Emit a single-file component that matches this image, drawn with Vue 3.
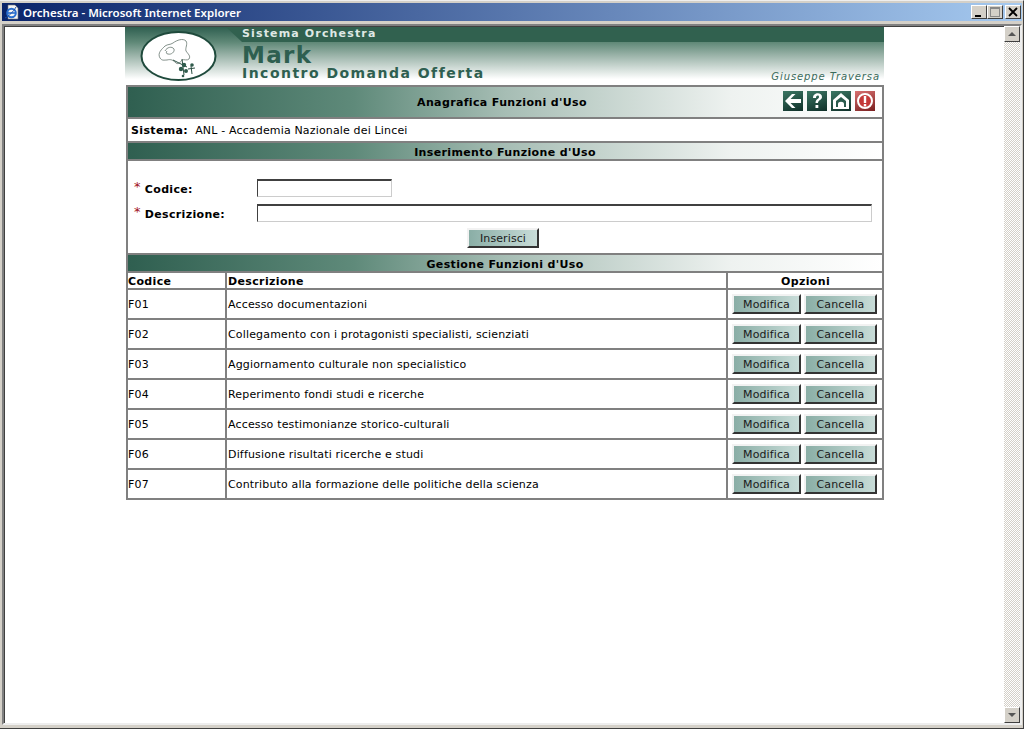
<script setup>
const rows = [
  ['F01', 'Accesso documentazioni'],
  ['F02', 'Collegamento con i protagonisti specialisti, scienziati'],
  ['F03', 'Aggiornamento culturale non specialistico'],
  ['F04', 'Reperimento fondi studi e ricerche'],
  ['F05', 'Accesso testimonianze storico-culturali'],
  ['F06', 'Diffusione risultati ricerche e studi'],
  ['F07', 'Contributo alla formazione delle politiche della scienza'],
]
</script>

<template>
  <div class="window">
    <div class="titlebar">
      <svg class="ie" width="16" height="16" viewBox="0 0 16 16">
        <path d="M4 1h7l3 3v11H4z" fill="#f4f4f4" stroke="#777" stroke-width=".6" />
        <circle cx="7.500" cy="9" r="4.300" fill="none" stroke="#2a6fd0" stroke-width="2" />
        <path d="M3.500 9h8" stroke="#2a6fd0" stroke-width="1.600" />
        <path d="M1 14c3-1 9-7 11-11" fill="none" stroke="#1b4fa8" stroke-width="1" />
      </svg>
      <span class="title-text">Orchestra - Microsoft Internet Explorer</span>
      <div class="win-btns">
        <button class="win-btn">
          <svg width="12" height="12" viewBox="0 0 12 12"><rect x="2" y="9" width="6" height="2" fill="#000" /></svg>
        </button>
        <button class="win-btn">
          <svg width="12" height="12" viewBox="0 0 12 12"><rect x="1.500" y="1.500" width="9" height="9" fill="none" stroke="#888" /><rect x="1" y="1" width="10" height="2" fill="#888" /></svg>
        </button>
        <button class="win-btn close">
          <svg width="12" height="12" viewBox="0 0 12 12"><path d="M2 2l8 8M10 2l-8 8" stroke="#000" stroke-width="1.800" /></svg>
        </button>
      </div>
    </div>

    <div class="client">
      <div class="viewport">
        <div class="page">
          <header class="banner">
            <div class="banner-logo">
              <svg width="78" height="54" viewBox="0 0 78 54">
                <ellipse cx="38.500" cy="27" rx="37" ry="24" fill="#fff" stroke="#1f4a3c" stroke-width="2" />
                <path d="M20 29c-3-5 2-9 5-12 3-2 5-1 8-3 4-3 10-5 13-2 2 3-1 7 0 10 2 3 5 5 3 8-2 2-5 0-7 1-2 2-3 5-6 3-3-3-5-4-9-3-3 0-5 1-7-2z" fill="none" stroke="#66766f" stroke-width=".8" />
                <path d="M25 22c2-4 7-5 9-2 1 3-3 6-6 5-2 0-2-2-1-3" fill="none" stroke="#66766f" stroke-width=".8" />
                <path d="M33 31l14 7M42 30l2 16M51 37l1 8M48 40l7-1" stroke="#2c4f43" stroke-width="1" fill="none" />
                <circle cx="44" cy="36" r="2.200" fill="#2f5b4c" />
                <circle cx="41" cy="40" r="2.200" fill="#2f5b4c" />
                <circle cx="46" cy="42" r="2" fill="#2f5b4c" />
                <circle cx="52" cy="36" r="1.800" fill="#2f5b4c" />
                <circle cx="43" cy="47" r="1.300" fill="#2f5b4c" />
              </svg>
            </div>
            <div class="banner-text">
              <div class="banner-band">Sistema Orchestra</div>
              <div class="banner-mark">Mark</div>
              <div class="banner-sub-row">
                <span class="banner-sub">Incontro Domanda Offerta</span>
                <span class="banner-author">Giuseppe Traversa</span>
              </div>
            </div>
          </header>

          <section class="box top-bar">
            <span class="top-title">Anagrafica Funzioni d'Uso</span>
            <div class="tools">
              <svg class="tool" viewBox="0 0 20 20">
                <path d="M2 10l7-7h3.500l-5 5H18v4H7.500l5 5H9z" fill="#fff" />
              </svg>
              <svg class="tool" viewBox="0 0 20 20">
                <path d="M6 7c0-6 9-6 9-1 0 3-4 3-4 6H8.500c0-4 3.500-4 3.500-6 0-2-3-2-3 1z" fill="#fff" />
                <rect x="8.500" y="14" width="2.800" height="3" fill="#fff" />
              </svg>
              <svg class="tool" viewBox="0 0 20 20">
                <path d="M10 2l8 7v9H2V9z" fill="#fff" />
                <path d="M5 10l5-4 5 4v6h-2v-3c0-3-6-3-6 0v3H5z" fill="#2c5c4e" />
              </svg>
              <svg class="tool stop" viewBox="0 0 20 20">
                <circle cx="10" cy="10" r="7" fill="#c43a3a" stroke="#fff" stroke-width="2" />
                <rect x="8.800" y="5" width="2.400" height="7" fill="#fff" />
                <rect x="8.800" y="13" width="2.400" height="2.400" fill="#fff" />
              </svg>
            </div>
          </section>

          <section class="box system">
            <b>Sistema:</b><span>ANL - Accademia Nazionale dei Lincei</span>
          </section>

          <section class="box bar">Inserimento Funzione d'Uso</section>
          <section class="box form">
            <div class="field">
              <label><i>*</i>Codice:</label>
              <input class="input short" type="text" />
            </div>
            <div class="field">
              <label><i>*</i>Descrizione:</label>
              <input class="input long" type="text" />
            </div>
            <div class="form-actions">
              <button class="btn insert">Inserisci</button>
            </div>
          </section>

          <section class="box bar">Gestione Funzioni d'Uso</section>
          <table class="grid">
            <thead>
              <tr>
                <th class="c1">Codice</th>
                <th class="c2">Descrizione</th>
                <th class="c3">Opzioni</th>
              </tr>
            </thead>
            <tbody>
              <tr v-for="row in rows" :key="row[0]">
                <td>{{ row[0] }}</td>
                <td>{{ row[1] }}</td>
                <td class="actions">
                  <button class="btn">Modifica</button>
                  <button class="btn">Cancella</button>
                </td>
              </tr>
            </tbody>
          </table>
        </div>
      </div>

      <div class="scrollbar">
        <button class="sb-btn"><span class="arrow up"></span></button>
        <div class="sb-track"></div>
        <button class="sb-btn"><span class="arrow down"></span></button>
      </div>
    </div>
  </div>
</template>

<style>
html, body {
  margin: 0;
  overflow: hidden;
}
</style>

<style scoped>
.window {
  width: 1024px;
  height: 729px;
  box-sizing: border-box;
  display: flex;
  flex-direction: column;
  background: #d4d0c8;
  padding: 2px 1px 3px 2px;
  border-top: 1px solid #eee;
  border-bottom: 1px solid #404040;
  border-right: 1px solid #404040;
  font-family: "DejaVu Sans", Verdana, sans-serif;
  font-size: 11px;
  letter-spacing: .16px;
  color: #000;
}
.titlebar {
  height: 18px;
  margin-bottom: 3px;
  display: flex;
  align-items: center;
  gap: 3px;
  padding: 0 1px 0 2px;
  background: linear-gradient(90deg, #0a246a, #a6caf0);
  color: #fff;
}
.title-text {
  font-family: "Noto Sans", "DejaVu Sans", sans-serif;
  font-size: 11.500px;
  font-weight: 600;
  letter-spacing: 0;
}
.win-btns {
  margin-left: auto;
  display: flex;
}
.win-btn {
  width: 16px;
  height: 14px;
  padding: 0;
  border: 1px solid;
  border-color: #fff #404040 #404040 #fff;
  background: #d4d0c8;
  display: flex;
  align-items: center;
  justify-content: center;
}
.close {
  margin-left: 2px;
}
.client {
  flex: 1;
  min-height: 0;
  display: flex;
  background: #fff;
  border: 2px solid;
  border-color: #808080 #eee #eee #808080;
  box-shadow: inset 1px 1px 0 #404040;
}
.viewport {
  flex: 1;
  min-width: 0;
  padding-top: 1px;
  padding-left: 122px;
}
.page {
  width: 758px;
  display: flex;
  flex-direction: column;
}
.banner {
  width: 759px;
  height: 58px;
  margin-left: -1px;
  display: flex;
  background: linear-gradient(180deg, #2f5f50 0, #5f8877 26%, #9db5ab 50%, #fff 90%);
}
.banner-logo {
  width: 117px;
  padding: 2px 0 0 15px;
  box-sizing: border-box;
}
.banner-text {
  flex: 1;
  min-width: 0;
}
.banner-band {
  height: 15px;
  line-height: 13px;
  position: relative;
  background: #31614f;
  color: #dfe8e4;
  font-size: 11px;
  font-weight: 700;
  letter-spacing: 1.150px;
}
.banner-band::before {
  content: "";
  position: absolute;
  top: 0;
  left: -16px;
  width: 16px;
  height: 15px;
  background: #31614f;
  clip-path: polygon(0 0, 100% 0, 100% 100%);
}
.banner-mark {
  height: 25px;
  line-height: 27px;
  font-size: 23px;
  font-weight: 700;
  letter-spacing: 1.300px;
  color: #2e5f50;
}
.banner-sub-row {
  display: flex;
  justify-content: space-between;
  height: 16px;
  line-height: 13px;
}
.banner-sub {
  font-size: 14px;
  font-weight: 700;
  letter-spacing: 1.470px;
  color: #2e5f50;
}
.banner-author {
  font-size: 10px;
  font-style: italic;
  letter-spacing: .9px;
  color: #3a6a5a;
  margin: 3px 4px 0 0;
}
.box {
  border: 2px solid #808080;
  box-sizing: border-box;
}
.top-bar {
  height: 34px;
  display: flex;
  align-items: center;
  justify-content: center;
  position: relative;
  background: linear-gradient(90deg, #2f5f50, #5f8a7a 30%, #a6bdb4 50%, #eef2f0 80%, #fff 100%);
}
.top-title {
  font-weight: 700;
  letter-spacing: .36px;
  margin-right: 6px;
}
.tools {
  position: absolute;
  top: 4px;
  right: 7px;
  display: flex;
  gap: 4px;
}
.tool {
  width: 20px;
  height: 20px;
  background: linear-gradient(160deg, #3c7764, #0f2f28);
}
.stop {
  background: linear-gradient(160deg, #d87070, #7a1f1f);
}
.system {
  height: 24px;
  padding-left: 3px;
  display: flex;
  align-items: center;
  gap: 7px;
  border-top-width: 0;
}
.system b {
  letter-spacing: .36px;
}
.bar {
  height: 18px;
  padding-top: 2px;
  border-width: 0 2px 2px;
  text-align: center;
  font-weight: 700;
  letter-spacing: .36px;
  line-height: 16px;
  background: linear-gradient(90deg, #2f5f50, #5f8a7a 30%, #a6bdb4 50%, #eef2f0 80%, #fff 100%);
}
.form {
  height: 94px;
  padding: 18px 10px 0 6px;
  border-top-width: 0;
  display: flex;
  flex-direction: column;
  gap: 7px;
}
.field {
  display: flex;
  align-items: center;
  height: 18px;
}
.field label {
  width: 123px;
  font-weight: 700;
  letter-spacing: .33px;
}
.field i {
  color: #a01020;
  font-style: normal;
  font-weight: 400;
  font-size: 13px;
  margin-right: 4px;
  position: relative;
  top: -2px;
}
.input {
  height: 18px;
  box-sizing: border-box;
  padding: 0;
  border: 1px solid;
  border-width: 2px 1px 1px 1px;
  border-color: #404040 #ccc #ccc #404040;
  background: #fff;
}
.short {
  width: 135px;
}
.long {
  width: 615px;
}
.form-actions {
  display: flex;
  justify-content: center;
  margin-top: -1px;
  margin-right: 0;
}
.btn {
  height: 20px;
  padding: 0;
  box-sizing: border-box;
  font-family: inherit;
  font-size: 11px;
  letter-spacing: .1px;
  color: #1a1a1a;
  border: 2px solid;
  border-color: #f2f2f2 #333 #333 #f2f2f2;
  background: linear-gradient(90deg, #8aaea6, #c8dcd8);
}
.insert {
  width: 72px;
}
.grid {
  width: 756px;
  border-collapse: collapse;
  table-layout: fixed;
}
.grid th,
.grid td {
  box-sizing: border-box;
  border: 2px solid #808080;
  padding: 0 0 0 1px;
  font-size: 11px;
  text-align: left;
}
.grid th:first-child,
.grid td:first-child {
  padding-left: 0;
}
.grid th {
  height: 16px;
  padding-top: 1px;
  font-weight: 700;
  border-top: 0;
  letter-spacing: .36px;
}
.grid td {
  height: 30px;
}
.c1 {
  width: 99px;
}
.c2 {
  width: 501px;
}
.c3 {
  width: 156px;
}
.grid .c3 {
  text-align: center;
}
.grid .actions {
  padding: 0 0 0 4px;
}
.actions .btn {
  width: 69px;
  margin-right: 3px;
}
.actions .btn + .btn {
  width: 73px;
  margin-right: 0;
}
.scrollbar {
  width: 16px;
  display: flex;
  flex-direction: column;
  background: repeating-conic-gradient(#d4d0c8 0 25%, #fff 0 50%) 0 0 / 2px 2px;
}
.sb-track {
  flex: 1;
}
.sb-btn {
  width: 16px;
  height: 16px;
  padding: 0;
  border: 1px solid;
  border-color: #fff #404040 #404040 #fff;
  background: #d4d0c8;
  display: flex;
  align-items: center;
  justify-content: center;
}
.arrow {
  width: 0;
  height: 0;
  border-left: 4px solid transparent;
  border-right: 4px solid transparent;
}
.up {
  border-bottom: 4px solid #555;
}
.down {
  border-top: 4px solid #555;
}
</style>
